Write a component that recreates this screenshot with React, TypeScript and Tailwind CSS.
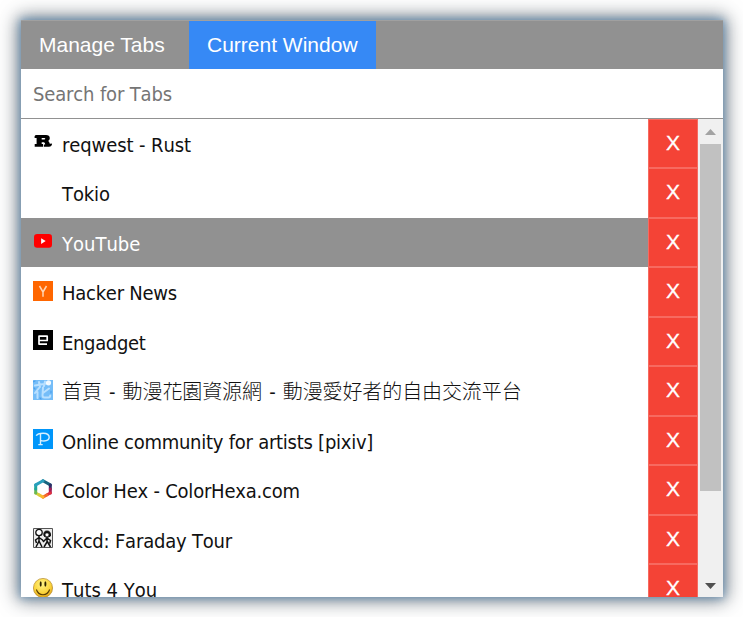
import React from "react";

const RustIcon = () => (
  <svg viewBox="0 0 20 20" className="h-5 w-5">
    <path
      fillRule="evenodd"
      fill="#000"
      d="M1.6 4.2Q2 3.1 3.4 3.1H13Q16.7 3.2 16.8 6.2Q16.8 8 15.2 8.9Q16.4 9.5 16.6 11.2Q17 12.4 18 11.4L19.1 11.7Q18.7 14.6 16 14.8H10.8V12.4H12.2Q12.2 10.5 10.9 10.2H8.7V12.1H10V14.8H1.7V12.1H3.6V6H1.6ZM8.7 5.9V7.6H11.2Q12.3 7.4 12.3 6.7Q12.2 6 11.2 5.9Z"
    />
  </svg>
);

const YouTubeIcon = () => (
  <svg viewBox="0 0 20 20" className="h-5 w-5">
    <rect x="1" y="3" width="18" height="13.8" rx="3.2" fill="#f00" />
    <path d="M8.1 7.2v5.7l4.6-2.85z" fill="#fff" />
  </svg>
);

const HackerNewsIcon = () => (
  <svg viewBox="0 0 20 20" className="h-5 w-5">
    <path d="M0 0h20v20H0z" fill="#f60" />
    <path d="M6.5 5l3.5 6v4.8M13.5 5L10 11" fill="none" stroke="#ffd6b5" strokeWidth="1.5" />
  </svg>
);

const EngadgetIcon = () => (
  <svg viewBox="0 0 20 20" className="h-5 w-5">
    <path d="M0 0h20v20H0z" fill="#000" />
    <path
      d="M6 10.5h8.2V6.2H6v7.9h8"
      fill="none"
      stroke="#fff"
      strokeWidth="1.7"
      strokeLinejoin="round"
    />
  </svg>
);

const FlowerIcon = () => (
  <svg viewBox="0 0 20 20" className="h-5 w-5">
    <path d="M0 0h20v20H0z" fill="#75bdf8" />
    <g fill="none" stroke="#b9e0ff" strokeLinecap="round">
      <path
        d="M2 5.5L14 3.5M6 2l1 5M12 1.5L11 6M6 8L2 13M4.5 12v6M10 7.5l-.5 8q0 2 2 2h4q1.7 0 1.7-2M16 8.5l-6 4.5"
        strokeWidth="2"
      />
      <path d="M0 2l2-1M1 8l1 1M18 11v2M7 18l1 1" stroke="#4ba0ed" strokeWidth="1.2" />
    </g>
    <circle cx="15.5" cy="2.8" r="2.6" fill="#fff" opacity=".9" />
  </svg>
);

const PixivIcon = () => (
  <svg viewBox="0 0 20 20" className="h-5 w-5">
    <path d="M0 0h20v20H0z" fill="#0096fa" />
    <path
      d="M3.3 6.8Q4.4 4.2 10.2 4.2Q16.2 4.3 16.2 8.3Q16 12 11 12Q8.8 12 7.5 11.3M7.5 4.8V15.4M5.3 15.6h4.4"
      fill="none"
      stroke="#d8f0ff"
      strokeWidth="1.4"
    />
  </svg>
);

const HexIcon = () => (
  <svg viewBox="0 0 20 20" className="h-5 w-5" fill="none" strokeWidth="3" strokeLinecap="round">
    <path d="M10 1.8l7.3 4.1" stroke="#17647f" />
    <path d="M17.3 5.9v4.1" stroke="#332c66" />
    <path d="M17.3 10v4" stroke="#a51e55" />
    <path d="M17.3 14l-3.6 2" stroke="#e0303e" />
    <path d="M13.7 16L10 18.1" stroke="#f36a2c" />
    <path d="M10 18.1L6.3 16" stroke="#fbb52c" />
    <path d="M6.3 16L2.7 14" stroke="#d7cf3a" />
    <path d="M2.7 14V10" stroke="#67b857" />
    <path d="M2.7 10V5.9" stroke="#20a59d" />
    <path d="M2.7 5.9l7.3-4.1" stroke="#299fbd" />
  </svg>
);

const XkcdIcon = () => (
  <svg viewBox="0 0 20 20" className="h-5 w-5" fill="none" stroke="#111">
    <path d="M.5.5h19v19H.5z" fill="#eee" stroke="#555" />
    <circle cx="6" cy="4.5" r="3.2" fill="#fff" strokeWidth="1.3" />
    <path d="M6 8v5l-3 6M6 13l3 6M6 9.5L2.5 12l1 3M6 9.5L9.5 12 11 14" strokeWidth="1.5" />
    <path d="M11 8q-1-5 3-5t3.5 5l-2 1h-3z" fill="#111" />
    <circle cx="14" cy="6.8" r="1.9" fill="#fff" strokeWidth=".5" />
    <path d="M14 9v5l-3 5M14 13l3.5 6M14 10l-3 3M14 10l3.5 2.5-.8 3" strokeWidth="1.5" />
  </svg>
);

const SmileyIcon = () => (
  <svg viewBox="0 0 20 20" className="h-5 w-5">
    <defs>
      <radialGradient id="face" cx=".45" cy=".3" r=".75">
        <stop offset="0" stopColor="#fff385" />
        <stop offset=".6" stopColor="#fbd43b" />
        <stop offset="1" stopColor="#d99813" />
      </radialGradient>
    </defs>
    <circle cx="10" cy="10" r="9.6" fill="url(#face)" stroke="#b5892a" strokeWidth=".7" />
    <ellipse cx="7.7" cy="6" rx="1" ry="2.7" fill="#2d2200" />
    <ellipse cx="12.4" cy="6" rx="1" ry="2.7" fill="#2d2200" />
    <path d="M3.4 11.5Q5 16.7 10 16.7t6.6-5.2" fill="none" stroke="#573e05" strokeWidth="1.1" />
  </svg>
);

type Tab = { title: string; icon?: React.ReactNode; active?: boolean; text: string };

const tabs: Tab[] = [
  { title: "reqwest - Rust", icon: <RustIcon />, text: "tracking-[-0.1px]" },
  { title: "Tokio", text: "tracking-[-0.1px]" },
  { title: "YouTube", icon: <YouTubeIcon />, active: true, text: "tracking-[0px]" },
  { title: "Hacker News", icon: <HackerNewsIcon />, text: "tracking-[-0.25px]" },
  { title: "Engadget", icon: <EngadgetIcon />, text: "tracking-[-0.35px]" },
  {
    title: "首頁 - 動漫花園資源網 - 動漫愛好者的自由交流平台",
    icon: <FlowerIcon />,
    text: "font-light tracking-[-0.1px] [word-spacing:1.6px]",
  },
  { title: "Online community for artists [pixiv]", icon: <PixivIcon />, text: "tracking-[-0.25px]" },
  { title: "Color Hex - ColorHexa.com", icon: <HexIcon />, text: "tracking-[-0.22px]" },
  { title: "xkcd: Faraday Tour", icon: <XkcdIcon />, text: "tracking-[-0.2px]" },
  { title: "Tuts 4 You", icon: <SmileyIcon />, text: "tracking-[0px]" },
];

function TabRow({ title, icon, active, text }: Tab) {
  return (
    <li className="flex h-[49.5px] shrink-0">
      <div
        className={`flex min-w-0 flex-1 items-start pl-3 ${active ? "bg-[#919191] text-white" : "text-[#111]"}`}
      >
        <span className="mt-[13.5px] h-5 w-5 shrink-0">{icon}</span>
        <span className={`ml-[9px] mt-[11px] whitespace-nowrap text-[20px] leading-[30px] ${text}`}>{title}</span>
      </div>
      <button className="w-[50px] border border-[#f76a60] bg-[#f44336] pb-[2px] font-['Liberation_Sans'] text-[21px] leading-none text-white [-webkit-text-stroke:0.3px_white]">
        X
      </button>
    </li>
  );
}

export default function App() {
  return (
    <div className="h-[617px] w-[743px] overflow-hidden bg-white pl-[21px] pt-5">
      <main className="flex h-[577px] w-[702px] flex-col bg-white font-['DejaVu_Sans_Condensed','DejaVu_Sans','Noto_Sans_CJK_TC',sans-serif] [font-kerning:none] [font-stretch:condensed] shadow-[0_0_8px_1px_#4a85b8a0,0_0_18px_3px_#28343da8]">
        <nav className="flex h-[49px] shrink-0 border-t border-[#a0a0a0] bg-[#919191] font-['Liberation_Sans'] text-[21px] leading-[48px] text-white [font-kerning:auto]">
          <div className="w-[168px] whitespace-nowrap pl-[18px]">Manage Tabs</div>
          <div className="w-[187px] whitespace-nowrap bg-[#3689f5] pl-[18px]">Current Window</div>
        </nav>
        <input
          className="h-[50px] shrink-0 border-b border-[#919191] bg-white pl-3 text-[20px] tracking-[-0.15px] outline-none placeholder:text-[#757575]"
          placeholder="Search for Tabs"
        />
        <div className="flex min-h-0 flex-1">
          <ul className="flex flex-1 flex-col overflow-hidden">
            {tabs.map((tab, i) => (
              <React.Fragment key={tab.title}>
                {i === 0 && <li className="-mt-[0.5px]" />}
                <TabRow {...tab} />
              </React.Fragment>
            ))}
          </ul>
          <div className="flex w-[25px] flex-col items-center bg-[#f0f0f0]">
            <svg viewBox="0 0 25 25" className="h-[25px] w-[25px] shrink-0">
              <path d="M7 16L12.5 10 18 16z" fill="#a3a3a3" />
            </svg>
            <div className="h-[347px] w-[21px] bg-[#c1c1c1]" />
            <div className="flex-1" />
            <svg viewBox="0 0 25 25" className="h-[25px] w-[25px] shrink-0">
              <path d="M7 11L12.5 17 18 11z" fill="#505050" />
            </svg>
          </div>
        </div>
      </main>
    </div>
  );
}
